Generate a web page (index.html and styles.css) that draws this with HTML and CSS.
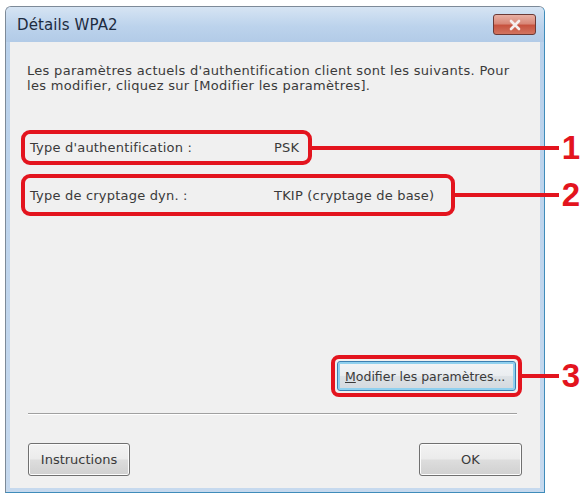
FILE: index.html
```html
<!DOCTYPE html>
<html lang="fr">
<head>
<meta charset="utf-8">
<title>Détails WPA2</title>
<link rel="stylesheet" href="styles.css">
</head>
<body>
<div class="window">
  <div class="titlebar">
    <span class="title">Détails WPA2</span>
    <span class="close">
      <svg width="14" height="12" viewBox="0 0 14 12"><path d="M3 2 L11 10 M11 2 L3 10" stroke="#f4efee" stroke-width="2.6" stroke-linecap="round"/></svg>
    </span>
  </div>
  <div class="client">
    <p class="intro">Les paramètres actuels d'authentification client sont les suivants. Pour<br>les modifier, cliquez sur [Modifier les paramètres].</p>

    <div class="callout row1">
      <div class="box box1"><span class="label">Type d'authentification :</span><span class="value">PSK</span></div>
      <span class="leader"></span><span class="num">1</span>
    </div>

    <div class="callout row2">
      <div class="box box2"><span class="label">Type de cryptage dyn. :</span><span class="value">TKIP (cryptage de base)</span></div>
      <span class="leader"></span><span class="num">2</span>
    </div>

    <div class="callout row3">
      <div class="box box3"><span class="btn btn-focus"><u>M</u>odifier les paramètres...</span></div>
      <span class="leader"></span><span class="num">3</span>
    </div>

    <div class="sep"></div>

    <div class="footer">
      <span class="btn btn-instr">Instructions</span>
      <span class="btn btn-ok">OK</span>
    </div>
  </div>
</div>
</body>
</html>
```

FILE: styles.css
```css
html, body {
  margin: 0;
  padding: 0;
  background: #ffffff;
}

body {
  font-family: "DejaVu Sans", "Liberation Sans", sans-serif;
  font-size: 13px;
  color: #3a3a3a;
}

.window {
  box-sizing: border-box;
  width: 540px;
  height: 487px;
  margin: 6px 0 0 5px;
  border: 1px solid #7d8a98;
  border-right-color: #3f8cba;
  border-bottom-color: #3f8cba;
  border-radius: 6px 6px 0 0;
  background: linear-gradient(to bottom, #cfdff0 0px, #b9d1eb 40px, #c6d9ee 100%);
  padding: 0 4px 4px 4px;
  display: flex;
  flex-direction: column;
}

.titlebar {
  height: 35px;
  display: flex;
  justify-content: space-between;
  align-items: center;
  padding-left: 7px;
  background: linear-gradient(to bottom, #d6e4f3 0%, #bcd3ec 55%, #b2cbe7 100%);
  margin: 0 -4px;
  padding-right: 8px;
  border-radius: 5px 5px 0 0;
}

.title {
  font-size: 15px;
  color: #1d2b40;
  letter-spacing: 0.1px;
  margin-left: 4px;
}

.close {
  align-self: flex-start;
  margin-top: 7px;
  width: 43px;
  height: 21px;
  box-sizing: border-box;
  border: 1px solid #6b3a36;
  border-radius: 3px;
  background: linear-gradient(to bottom, #e8b0a4 0%, #d98878 45%, #c7533f 55%, #d27460 100%);
  display: flex;
  align-items: center;
  justify-content: center;
}

.client {
  flex: 1;
  background: #f0f0f0;
}

.intro {
  margin: 0;
  padding: 21px 0 0 17px;
  line-height: 15px;
  letter-spacing: 0.3px;
}

.callout {
  display: flex;
  align-items: center;
  margin-left: 11px;
  width: 559px;
}

.row1 { margin-top: 37px; }
.row2 { margin-top: 9px; }
.row3 { margin-top: 139px; margin-left: 321px; width: 249px; }

.box {
  box-sizing: border-box;
  border: 4px solid #e3141e;
  border-radius: 9px;
  display: flex;
  align-items: center;
  padding-left: 5px;
  flex-shrink: 0;
  letter-spacing: 0.2px;
}

.box1 { width: 291px; height: 35px; }
.box2 { width: 434px; height: 42px; }
.box3 { width: 191px; height: 42px; padding: 2px; border-radius: 8px; letter-spacing: 0; }

.label {
  width: 244px;
  flex-shrink: 0;
}

.leader {
  flex: 1;
  height: 4px;
  background: #e3141e;
}

.num {
  width: 21px;
  text-align: right;
  font-family: "Liberation Sans", Arial, sans-serif;
  font-weight: bold;
  font-size: 33px;
  line-height: 30px;
  color: #e3141e;
}

.btn {
  box-sizing: border-box;
  display: flex;
  align-items: center;
  justify-content: center;
  border: 1px solid #707070;
  border-radius: 3px;
  background: linear-gradient(to bottom, #f3f3f3 0%, #ebebeb 48%, #dddddd 52%, #d0d0d0 100%);
  color: #3a3a3a;
  box-shadow: inset 0 0 0 1px #fcfcfc;
}

.btn-focus {
  width: 179px;
  height: 30px;
  justify-content: flex-start;
  padding-left: 7px;
  border-color: #3c7fb1;
  background: linear-gradient(to bottom, #f2f4f6 0%, #eaedf0 48%, #dde2e6 52%, #d3d9de 100%);
  box-shadow: inset 0 0 0 2px #8fd0ef;
  font-size: 12.5px;
}

.btn-focus u {
  text-decoration-thickness: 1px;
}

.sep {
  margin: 16px 23px 0 18px;
  height: 1px;
  background: #a0a0a0;
  border-bottom: 1px solid #ffffff;
}

.footer {
  display: flex;
  justify-content: space-between;
  padding: 0 18px;
  margin-top: 28px;
}

.btn-instr { width: 102px; height: 33px; }
.btn-ok { width: 103px; height: 33px; }
```
